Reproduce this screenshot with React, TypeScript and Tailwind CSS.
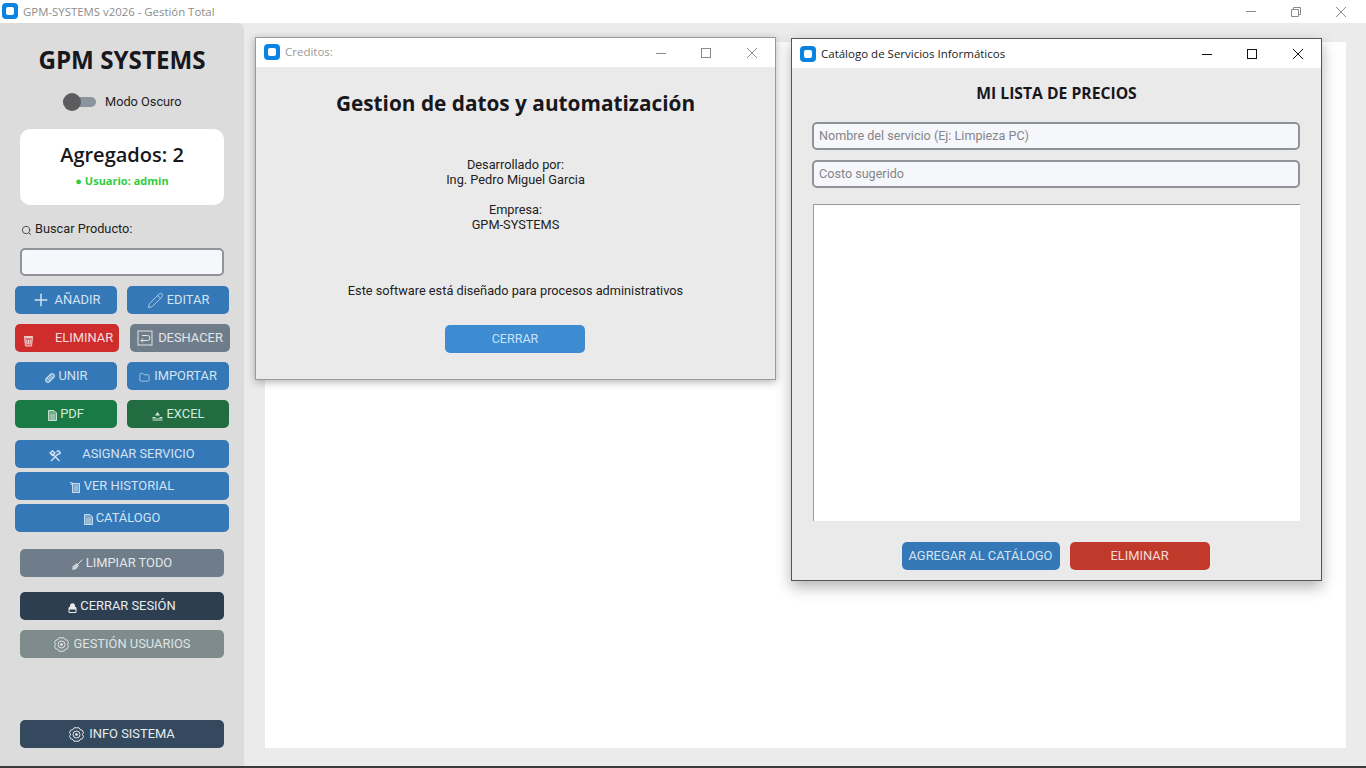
import { Plus, Pencil, Folder, Search } from "lucide-react";
import type { ReactNode } from "react";

const AppIcon = () => (
    <div className="flex h-4 w-4 items-center justify-center rounded-[4px] bg-[#0a84e0]">
        <div className="h-2 w-2 rounded-[2px] bg-white" />
    </div>
);

const TrashIcon = () => (
    <svg width="11" height="12" viewBox="0 0 11 12" fill="none" stroke="#f0c8c8" strokeWidth="1">
        <path d="M1.5 2.5h8l-1 8.5h-6z" fill="#f0c8c8" fillOpacity="0.45" />
        <path d="M1 1.5h9M3.5 5l.5 4M5.5 5v4M7.5 5l-.5 4" />
    </svg>
);

const UndoIcon = () => (
    <svg width="16" height="16" viewBox="0 0 16 16" fill="none" stroke="currentColor" strokeWidth="1">
        <rect x="1" y="1" width="14" height="14" />
        <path d="M6 12.5 4 10.5l2-2M4 10.5h6.5a2.5 2.5 0 0 0 0-5H5" />
    </svg>
);

const ClipIcon = () => (
    <svg width="12" height="12" viewBox="0 0 12 12" fill="none" stroke="currentColor">
        <rect x="0.8" y="3.7" width="10.4" height="4.6" rx="2.3" fill="currentColor" fillOpacity="0.4" transform="rotate(-45 6 6)" />
        <path d="M4.5 4.5l3 3M3 6l3 3M6 3l3 3" strokeWidth="0.7" />
    </svg>
);

const DocIcon = () => (
    <svg width="9" height="11" viewBox="0 0 9 11" fill="none" stroke="currentColor" strokeWidth="0.9">
        <path d="M.5.5h5.5l2.5 2.5v7.5h-8z" fill="currentColor" fillOpacity="0.45" />
        <path d="M2 5h5M2 7h5M2 9h5" strokeWidth="0.7" />
    </svg>
);

const NotebookIcon = () => (
    <svg width="10" height="11" viewBox="0 0 10 11" fill="none" stroke="currentColor" strokeWidth="0.9">
        <path d="M0 .5h2.5M1 .5v2h1.5" strokeWidth="0.7" />
        <rect x="2.5" y="1.5" width="7" height="9" fill="currentColor" fillOpacity="0.4" />
        <path d="M4 4h4M4 6h4M4 8h4" strokeWidth="0.7" />
    </svg>
);

const TrayIcon = () => (
    <svg width="11" height="10" viewBox="0 0 11 10" fill="currentColor">
        <path d="M5.5 1 8 4.5H3z" />
        <path d="M0.5 6h3v1h4V6h3v1.5h-10zM0.5 8.5h10v1h-10z" />
    </svg>
);

const ToolsIcon = () => (
    <svg width="12" height="12" viewBox="0 0 12 12" fill="none" stroke="currentColor" strokeWidth="1.3">
        <path d="M2 11 9.5 3.5M1 3 3.5 .8 6 3 3.5 5.5zM10.5 11 3 3.5M7.5 2l2-1.5L11.5 3 9.5 4.5" />
    </svg>
);

const BrushIcon = () => (
    <svg width="11" height="11" viewBox="0 0 11 11" fill="none" stroke="currentColor">
        <path d="M10.5.5 5 6" strokeWidth="1" />
        <path d="M4.5 4.500l2 2-2.500 3.500-3.500.5.500-3z" fill="currentColor" fillOpacity="0.8" strokeWidth="0.5" />
    </svg>
);

const LockIcon = () => (
    <svg width="9" height="10" viewBox="0 0 9 10" fill="currentColor">
        <path d="M2 4V2.800a2.500 2.500 0 0 1 5 0V4z" />
        <path d="M1 4.500h7v5h-7z" fill="none" stroke="currentColor" />
        <path d="M1 4h7v2.500h-7z" />
    </svg>
);

const GearIcon = () => (
    <svg width="15" height="15" viewBox="0 0 15 15" fill="none" stroke="currentColor" strokeWidth="1">
        <path d="M5 .8h5l1 1.700 2.400.8 1 2.200-.9 2 .9 2-1 2.200-2.400.8-1 1.700H5l-1-1.700-2.400-.8-1-2.200.9-2-.9-2 1-2.200 2.400-.8z" />
        <circle cx="7.500" cy="7.500" r="3.500" />
        <circle cx="7.500" cy="7.500" r="1" fill="currentColor" />
    </svg>
);

const ActionButton = ({ className, children }: { className: string; children: ReactNode }) => (
    <button className={`flex h-7 items-center justify-center rounded-[5px] text-[12.9px] leading-none ${className}`}>
        {children}
    </button>
);

const WindowControls = ({ muted }: { muted?: boolean }) => (
    <div className={`flex items-center ${muted ? "text-[#8a8a8a]" : "text-[#111]"}`}>
        <svg width="12" height="12" viewBox="0 0 12 12" stroke="currentColor" fill="none">
            <path d="M1 6.500h10" />
        </svg>
        <svg className="ml-[33px]" width="12" height="12" viewBox="0 0 12 12" stroke="currentColor" fill="none">
            <rect x="1.500" y="1.500" width="9" height="9" />
        </svg>
        <svg className="ml-[34px]" width="12" height="12" viewBox="0 0 12 12" stroke="currentColor" fill="none">
            <path d="M1 1l10 10M11 1 1 11" />
        </svg>
    </div>
);

const Sidebar = () => (
    <aside className="flex w-[244px] shrink-0 flex-col rounded-tr-[6px] bg-[#dcdcdc] font-['Roboto',sans-serif]">
        <h1 className="mt-[19px] h-[36px] text-center font-['Open_Sans',sans-serif] text-[24.2px] leading-[36px] font-bold text-[#17171c]">
            GPM SYSTEMS
        </h1>
        <div className="mt-[14px] flex h-[20px] items-center pl-[63px]">
            <div className="relative h-[10px] w-[33px] rounded-full bg-[#8a949e]">
                <div className="absolute top-[-4px] left-0 h-[18px] w-[18px] rounded-full bg-[#5c5c5e]" />
            </div>
            <span className="ml-[9px] text-[12.75px] text-[#222]">Modo Oscuro</span>
        </div>
        <div className="mt-[17px] ml-[20px] flex h-[76px] w-[204px] flex-col items-center rounded-[10px] bg-white">
            <div className="mt-[12px] font-['Open_Sans',sans-serif] text-[20px] leading-[28px] font-semibold text-[#17171c]">
                Agregados: 2
            </div>
            <div className="mt-[4px] font-['Open_Sans',sans-serif] text-[11px] leading-[16px] font-bold text-[#2ecc40]">
                ● Usuario: admin
            </div>
        </div>
        <div className="mt-[15px] ml-[21px] flex h-[18px] items-center text-[12.75px] text-[#222]">
            <Search className="mt-[3px] mr-[3px] text-[#444]" size={11} />
            Buscar Producto:
        </div>
        <div className="mt-[10px] ml-[20px] h-[28px] w-[204px] rounded-[5px] border-2 border-[#90939a] bg-[#f6f7fa]" />

        <div className="mt-[10px] ml-[15px] flex gap-[10px] text-[#d3e3f2]">
            <ActionButton className="w-[102px] bg-[#3478b8]">
                <Plus className="mr-[3px]" size={20} strokeWidth={1.75} />
                AÑADIR
            </ActionButton>
            <ActionButton className="w-[102px] bg-[#3478b8]">
                <Pencil className="mr-[3px]" size={17} strokeWidth={1.1} />
                EDITAR
            </ActionButton>
        </div>
        <div className="mt-[10px] ml-[15px] flex gap-[11px]">
            <ActionButton className="w-[104px] justify-start bg-[#cf2d2d] pl-[8px] text-[#f5dcdc]">
                <span className="mt-[5px] flex"><TrashIcon /></span>
                <span className="ml-[21px]">ELIMINAR</span>
            </ActionButton>
            <ActionButton className="w-[100px] bg-[#6f7d8a] text-[#e2e6ea]">
                <span className="flex"><UndoIcon /></span>
                <span className="ml-[5px]">DESHACER</span>
            </ActionButton>
        </div>
        <div className="mt-[10px] ml-[15px] flex gap-[10px] text-[#d3e3f2]">
            <ActionButton className="w-[102px] bg-[#3478b8]">
                <span className="mt-[3px] mr-[2px] flex"><ClipIcon /></span>
                UNIR
            </ActionButton>
            <ActionButton className="w-[102px] bg-[#3478b8]">
                <Folder className="mt-[3px] mr-[4px]" size={11} strokeWidth={1.5} />
                IMPORTAR
            </ActionButton>
        </div>
        <div className="mt-[10px] ml-[15px] flex gap-[10px] text-[#d3ebdd]">
            <ActionButton className="w-[102px] bg-[#1a7a45]">
                <span className="mt-[3px] mr-[3px] flex"><DocIcon /></span>
                PDF
            </ActionButton>
            <ActionButton className="w-[102px] bg-[#226c41]">
                <span className="mt-[4px] mr-[4px] flex"><TrayIcon /></span>
                EXCEL
            </ActionButton>
        </div>
        <div className="mt-[12px] ml-[15px] flex w-[214px] flex-col gap-[4px] text-[#d3e3f2]">
            <ActionButton className="bg-[#3478b8]">
                <span className="mt-[3px] mr-[21px] flex"><ToolsIcon /></span>
                ASIGNAR SERVICIO
            </ActionButton>
            <ActionButton className="bg-[#3478b8]">
                <span className="mt-[3px] mr-[4px] flex"><NotebookIcon /></span>
                VER HISTORIAL
            </ActionButton>
            <ActionButton className="bg-[#3478b8]">
                <span className="mt-[3px] mr-[3px] flex"><DocIcon /></span>
                CATÁLOGO
            </ActionButton>
        </div>
        <div className="mt-[17px] ml-[20px] flex w-[204px] flex-col">
            <ActionButton className="bg-[#6f7d8a] text-[#e2e6ea]">
                <span className="mt-[3px] mr-[3px] flex"><BrushIcon /></span>
                LIMPIAR TODO
            </ActionButton>
            <ActionButton className="mt-[15px] bg-[#2c3e50] text-[#e8ecf0]">
                <span className="mt-[3px] mr-[3px] flex"><LockIcon /></span>
                CERRAR SESIÓN
            </ActionButton>
            <ActionButton className="mt-[10px] bg-[#7f8c8d] text-[#dfe4e4]">
                <span className="mr-[5px] flex"><GearIcon /></span>
                GESTIÓN USUARIOS
            </ActionButton>
            <ActionButton className="mt-[62px] bg-[#34495e] text-[#e8ecf0]">
                <span className="mr-[5px] flex"><GearIcon /></span>
                INFO SISTEMA
            </ActionButton>
        </div>
    </aside>
);

const CreditsWindow = () => (
    <section className="absolute top-[37px] left-[255px] flex h-[343px] w-[521px] flex-col border border-[#9a9a9a] bg-[#eaeaea] font-['Roboto',sans-serif] shadow-[0_2px_8px_rgba(0,0,0,0.3)]">
        <div className="flex h-[29px] shrink-0 items-center justify-between bg-white pr-[17px] pl-[8px]">
            <div className="mb-[2px] flex items-center gap-[5px] font-['Open_Sans',sans-serif] text-[11.5px] text-[#9a9a9a]">
                <AppIcon />
                Creditos:
            </div>
            <WindowControls muted />
        </div>
        <h2 className="mt-[21px] text-center font-['Open_Sans',sans-serif] text-[20.8px] leading-[30px] font-bold text-[#17171c]">
            Gestion de datos y automatización
        </h2>
        <div className="mt-[39px] text-center text-[12.75px] leading-[15px] text-[#222]">
            <p>Desarrollado por:</p>
            <p>Ing. Pedro Miguel Garcia</p>
            <p className="mt-[15px]">Empresa:</p>
            <p>GPM-SYSTEMS</p>
            <p className="mt-[51px]">Este software está diseñado para procesos administrativos</p>
        </div>
        <button className="ml-[189px] mt-[27px] h-[28px] w-[140px] rounded-[5px] bg-[#3d8bd1] text-[12.5px] text-[#c9e3f8]">
            CERRAR
        </button>
    </section>
);

const CatalogWindow = () => (
    <section className="absolute top-[38px] left-[791px] flex h-[543px] w-[531px] flex-col border border-[#555] bg-[#eaeaea] font-['Roboto',sans-serif] shadow-[0_6px_14px_rgba(0,0,0,0.3)]">
        <div className="flex h-[29px] shrink-0 items-center justify-between bg-white pr-[17px] pl-[8px]">
            <div className="flex items-center gap-[5px] font-['Open_Sans',sans-serif] text-[11.5px] text-[#222]">
                <AppIcon />
                Catálogo de Servicios Informáticos
            </div>
            <WindowControls />
        </div>
        <h2 className="mt-[14px] text-center font-['Open_Sans',sans-serif] text-[15.7px] leading-[22px] font-bold text-[#17171c]">
            MI LISTA DE PRECIOS
        </h2>
        <div className="mt-[18px] ml-[20px] flex h-[28px] w-[488px] items-center rounded-[5px] border-2 border-[#90939a] bg-[#f6f7fa] pl-[5px] text-[12.6px] text-[#85858a]">
            Nombre del servicio (Ej: Limpieza PC)
        </div>
        <div className="mt-[10px] ml-[20px] flex h-[28px] w-[488px] items-center rounded-[5px] border-2 border-[#90939a] bg-[#f6f7fa] pl-[5px] text-[12.6px] text-[#85858a]">
            Costo sugerido
        </div>
        <div className="mt-[16px] ml-[21px] h-[317px] w-[487px] border-t border-l border-[#9a9a9a] bg-white" />
        <div className="mt-[21px] flex justify-center gap-[10px] pr-[2px] text-[12.9px]">
            <button className="h-[28px] w-[158px] rounded-[5px] bg-[#3478b8] text-[#d3e3f2]">AGREGAR AL CATÁLOGO</button>
            <button className="h-[28px] w-[140px] rounded-[5px] bg-[#c0392b] text-[#f5dcd8]">ELIMINAR</button>
        </div>
    </section>
);

export default function App() {
    return (
        <div className="relative flex h-[768px] w-[1366px] flex-col overflow-hidden bg-[#ebebeb]">
            <header className="flex h-[23px] shrink-0 items-center justify-between bg-white pr-[19px] pl-[2px]">
                <div className="flex items-center gap-[5px] font-['Open_Sans',sans-serif] text-[11.4px] text-[#8c8c8c]">
                    <AppIcon />
                    GPM-SYSTEMS v2026 - Gestión Total
                </div>
                <div className="flex items-center text-[#8a8a8a]">
                    <svg width="12" height="12" viewBox="0 0 12 12" stroke="currentColor" fill="none">
                        <path d="M1 5.500h10" />
                    </svg>
                    <svg className="ml-[33px]" width="12" height="12" viewBox="0 0 12 12" stroke="currentColor" fill="none">
                        <path d="M1.500 3.500h7v7h-7zM3.500 3.500v-2h7v7h-2" />
                    </svg>
                    <svg className="ml-[33px]" width="12" height="12" viewBox="0 0 12 12" stroke="currentColor" fill="none">
                        <path d="M1 1l10 10M11 1 1 11" />
                    </svg>
                </div>
            </header>
            <div className="flex min-h-0 flex-1">
                <Sidebar />
                <main className="flex-1 pt-[19px] pr-[20px] pb-[18px] pl-[21px]">
                    <div className="h-full bg-white" />
                </main>
            </div>
            <div className="h-[2px] shrink-0 bg-[#3a3a3a]" />
            <CreditsWindow />
            <CatalogWindow />
        </div>
    );
}
